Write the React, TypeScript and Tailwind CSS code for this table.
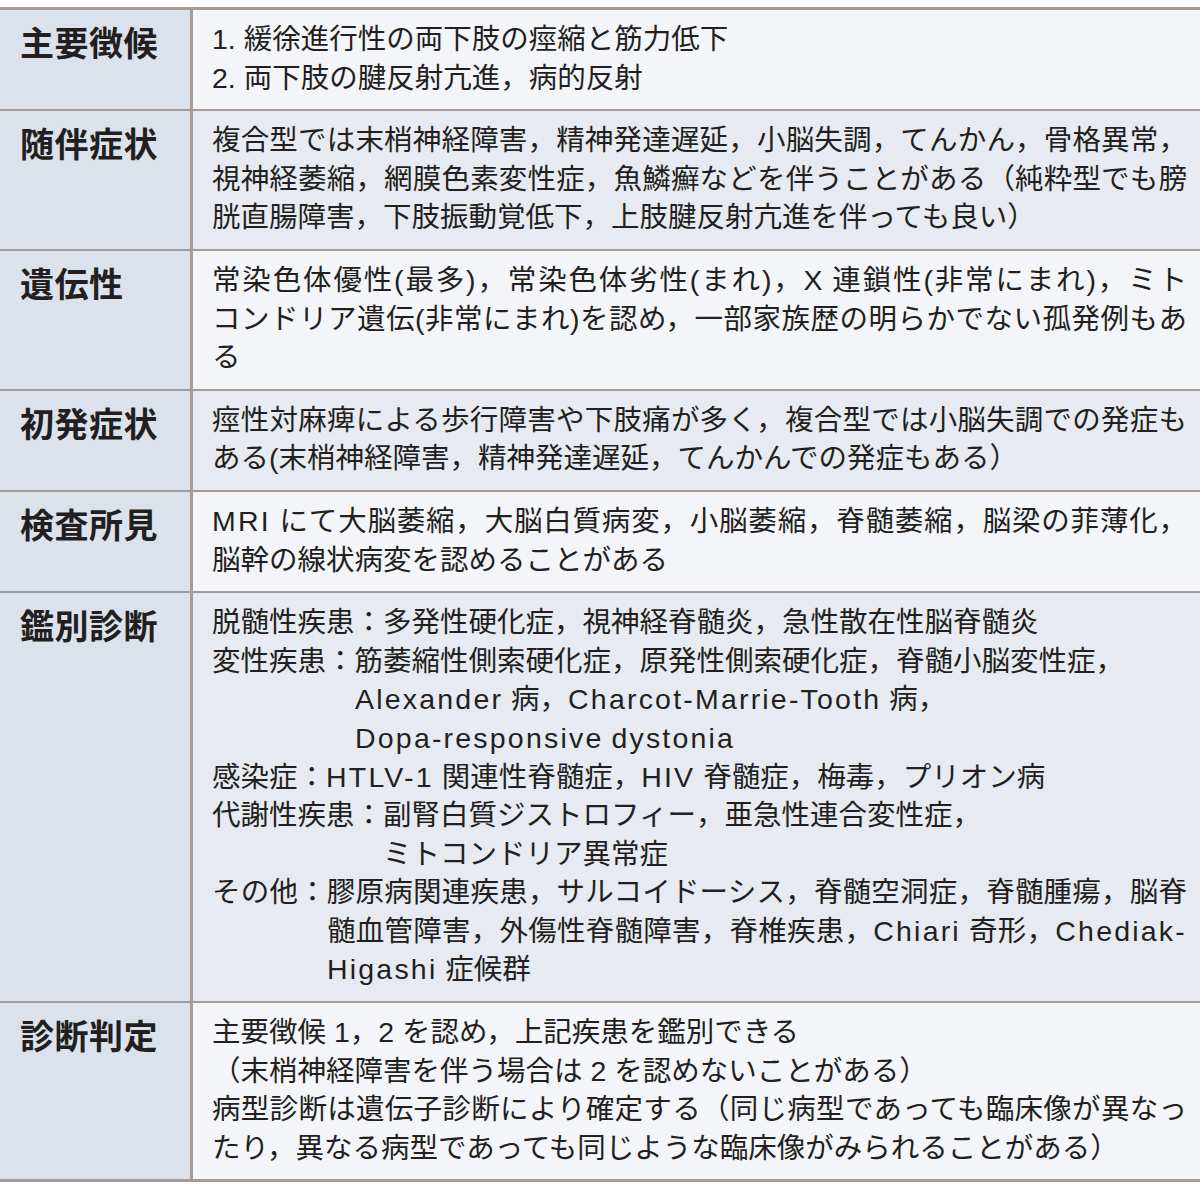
import React from "react";

type Line = { t: string; full?: boolean; indent?: string };

const rows: { label: string; lines: Line[] }[] = [
  {
    label: "主要徴候",
    lines: [
      { t: "1. 緩徐進行性の両下肢の痙縮と筋力低下" },
      { t: "2. 両下肢の腱反射亢進，病的反射" },
    ],
  },
  {
    label: "随伴症状",
    lines: [
      { t: "複合型では末梢神経障害，精神発達遅延，小脳失調，てんかん，骨格異常，", full: true },
      { t: "視神経萎縮，網膜色素変性症，魚鱗癬などを伴うことがある（純粋型でも膀", full: true },
      { t: "胱直腸障害，下肢振動覚低下，上肢腱反射亢進を伴っても良い）" },
    ],
  },
  {
    label: "遺伝性",
    lines: [
      { t: "常染色体優性(最多)，常染色体劣性(まれ)，X 連鎖性(非常にまれ)，ミト", full: true },
      { t: "コンドリア遺伝(非常にまれ)を認め，一部家族歴の明らかでない孤発例もあ", full: true },
      { t: "る" },
    ],
  },
  {
    label: "初発症状",
    lines: [
      { t: "痙性対麻痺による歩行障害や下肢痛が多く，複合型では小脳失調での発症も", full: true },
      { t: "ある(末梢神経障害，精神発達遅延，てんかんでの発症もある）" },
    ],
  },
  {
    label: "検査所見",
    lines: [
      { t: "MRI にて大脳萎縮，大脳白質病変，小脳萎縮，脊髄萎縮，脳梁の菲薄化，", full: true },
      { t: "脳幹の線状病変を認めることがある" },
    ],
  },
  {
    label: "鑑別診断",
    lines: [
      { t: "脱髄性疾患：多発性硬化症，視神経脊髄炎，急性散在性脳脊髄炎" },
      { t: "変性疾患：筋萎縮性側索硬化症，原発性側索硬化症，脊髄小脳変性症，" },
      { t: "Alexander 病，Charcot-Marrie-Tooth 病，", indent: "a" },
      { t: "Dopa-responsive dystonia", indent: "a" },
      { t: "感染症：HTLV-1 関連性脊髄症，HIV 脊髄症，梅毒，プリオン病" },
      { t: "代謝性疾患：副腎白質ジストロフィー，亜急性連合変性症，" },
      { t: "ミトコンドリア異常症", indent: "b" },
      { t: "その他：膠原病関連疾患，サルコイドーシス，脊髄空洞症，脊髄腫瘍，脳脊", full: true },
      { t: "髄血管障害，外傷性脊髄障害，脊椎疾患，Chiari 奇形，Chediak-", full: true, indent: "c" },
      { t: "Higashi 症候群", indent: "c" },
    ],
  },
  {
    label: "診断判定",
    lines: [
      { t: "主要徴候 1，2 を認め，上記疾患を鑑別できる" },
      { t: "（末梢神経障害を伴う場合は 2 を認めないことがある）" },
      { t: "病型診断は遺伝子診断により確定する（同じ病型であっても臨床像が異なっ", full: true },
      { t: "たり，異なる病型であっても同じような臨床像がみられることがある）" },
    ],
  },
];

function indentClass(i?: string) {
  if (i === "a") return "pl-[143px]";
  if (i === "b") return "pl-[171px]";
  if (i === "c") return "pl-[115px]";
  return "";
}

function renderText(t: string) {
  const parts = t.split(/([A-Za-z0-9][A-Za-z0-9\-]*)/);
  return parts.map((p, i) =>
    /^[A-Za-z0-9]/.test(p) && p.length > 1 ? (
      <span key={i} className="tracking-[2.2px]">
        {p}
      </span>
    ) : (
      <React.Fragment key={i}>{p}</React.Fragment>
    )
  );
}

export default function App() {
  return (
    <div
      className="w-[1200px] h-[1185px] bg-white pt-[7px] text-[#231f20]"
      style={{ fontFamily: '"Liberation Sans", "Noto Sans CJK JP", sans-serif' }}
    >
      <div className="border-t-[3px] border-b-[3px] border-[#a69b94]">
        {rows.map((r, idx) => (
          <div
            key={r.label}
            className={`flex ${idx > 0 ? "border-t-2 border-[#a69b94]" : ""}`}
          >
            <div
              className="w-[190px] shrink-0 bg-[#dce2eb] pl-[20px] pt-[12px] text-[34px] font-bold leading-[40px] tracking-[0.5px]"
              style={{ fontFamily: '"Noto Sans CJK JP", sans-serif' }}
            >
              {r.label}
            </div>
            <div
              className={`flex-1 border-l-[3px] border-[#a69b94] pl-[19px] pr-[13px] pt-[10px] pb-[12px] text-[28.5px] leading-[38.6px] ${
                idx % 2 === 0 ? "bg-[#f3f5f8]" : "bg-[#e7ebf1]"
              }`}
            >
              {r.lines.map((l, i) => (
                <div
                  key={i}
                  className={`whitespace-nowrap ${indentClass(l.indent)} ${
                    l.full ? "text-justify [text-align-last:justify]" : ""
                  }`}
                >
                  {renderText(l.t)}
                </div>
              ))}
            </div>
          </div>
        ))}
      </div>
    </div>
  );
}
